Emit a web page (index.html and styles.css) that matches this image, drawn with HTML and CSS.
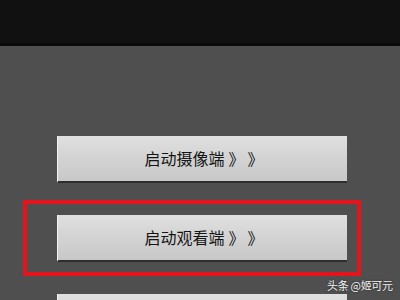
FILE: index.html
```html
<!DOCTYPE html>
<html lang="zh-CN">
<head>
    <meta charset="UTF-8">
    <meta name="viewport" content="width=device-width, initial-scale=1.0">
    <title>启动</title>
    <link rel="stylesheet" href="styles.css">
</head>
<body>
    <div class="topbar"></div>
    <div class="menu">
        <button class="btn" type="button">启动摄像端<span class="arrow">》</span><span class="arrow">》</span></button>
        <div class="highlight">
            <button class="btn" type="button">启动观看端<span class="arrow">》</span><span class="arrow">》</span></button>
        </div>
        <button class="btn" type="button"></button>
    </div>
    <div class="watermark">头条 @姬可元</div>
</body>
</html>
```

FILE: styles.css
```css
html, body {
    margin: 0;
    height: 100%;
    overflow: hidden;
}
body {
    background-color: #4f4f4f;
    font-family: "Noto Sans CJK SC", "Noto Sans", sans-serif;
    position: relative;
}
.topbar {
    height: 43px;
    background-color: #111111;
    border-bottom: 3px solid #0a0a0a;
}
.menu {
    display: flex;
    flex-direction: column;
    align-items: flex-start;
    padding-top: 90px;
}
.btn {
    width: 290px;
    height: 47px;
    margin: 0 0 0 57px;
    padding: 0 0 0 2px;
    border: none;
    border-left: 1px solid #f2f2f2;
    border-bottom: 2px solid #2e2e2e;
    background: linear-gradient(180deg, #e0e0e0 0%, #d4d4d4 45%, #c8c8c8 100%);
    color: #141414;
    font-family: "Noto Sans CJK SC", sans-serif;
    font-size: 16px;
    line-height: 45px;
    text-align: center;
    box-sizing: border-box;
}
.arrow {
    display: inline-block;
    width: 15px;
    padding-left: 4px;
    text-align: left;
}
.highlight {
    margin: 17px 0 0 23px;
    padding: 11px 10px 10px 30px;
    border: 4px solid #e3141c;
}
.highlight .btn {
    margin: 0;
}
.menu > .btn:last-child {
    margin-top: 18px;
}
.watermark {
    position: absolute;
    left: 327px;
    top: 277px;
    color: #f4f4f4;
    font-size: 11px;
    letter-spacing: -0.3px;
    white-space: nowrap;
    text-shadow: 0 0 2px rgba(0, 0, 0, 0.6);
}
```
